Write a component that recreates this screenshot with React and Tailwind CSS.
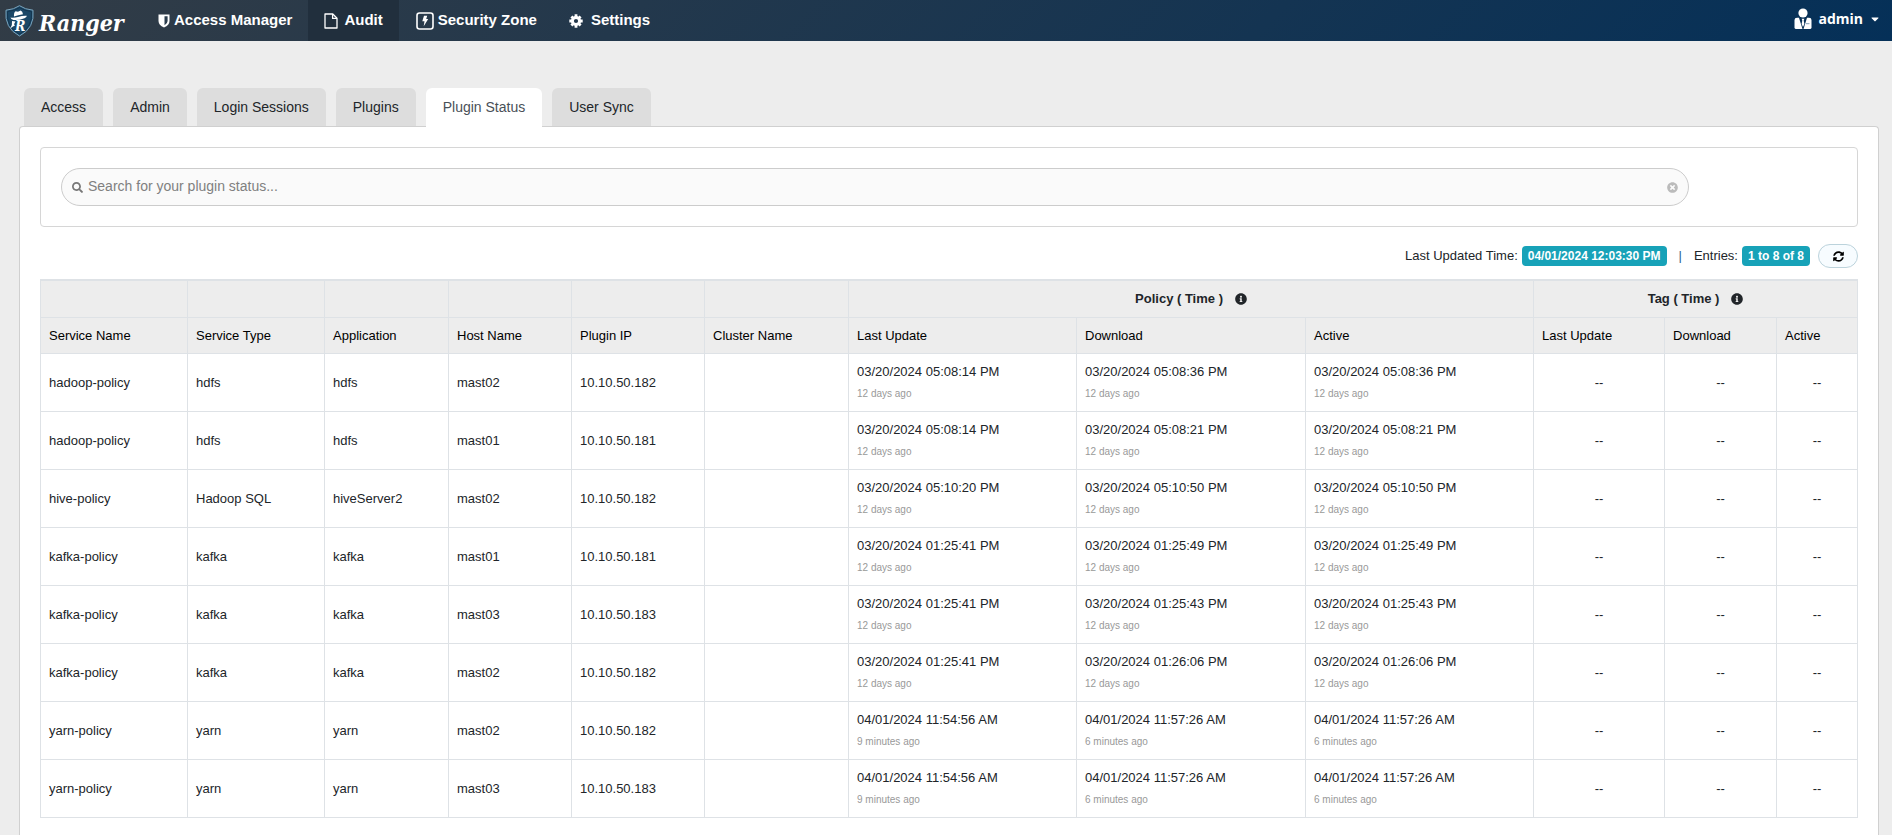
import { useState } from "react";
import {
  FaSearch,
  FaTimesCircle,
  FaInfoCircle,
  FaSyncAlt,
  FaCaretDown,
} from "react-icons/fa";

const tabs = ["Access", "Admin", "Login Sessions", "Plugins", "Plugin Status", "User Sync"];

const rows = [
  ["hadoop-policy", "hdfs", "hdfs", "mast02", "10.10.50.182", "03/20/2024 05:08:14 PM", "03/20/2024 05:08:36 PM", "12 days ago", "12 days ago"],
  ["hadoop-policy", "hdfs", "hdfs", "mast01", "10.10.50.181", "03/20/2024 05:08:14 PM", "03/20/2024 05:08:21 PM", "12 days ago", "12 days ago"],
  ["hive-policy", "Hadoop SQL", "hiveServer2", "mast02", "10.10.50.182", "03/20/2024 05:10:20 PM", "03/20/2024 05:10:50 PM", "12 days ago", "12 days ago"],
  ["kafka-policy", "kafka", "kafka", "mast01", "10.10.50.181", "03/20/2024 01:25:41 PM", "03/20/2024 01:25:49 PM", "12 days ago", "12 days ago"],
  ["kafka-policy", "kafka", "kafka", "mast03", "10.10.50.183", "03/20/2024 01:25:41 PM", "03/20/2024 01:25:43 PM", "12 days ago", "12 days ago"],
  ["kafka-policy", "kafka", "kafka", "mast02", "10.10.50.182", "03/20/2024 01:25:41 PM", "03/20/2024 01:26:06 PM", "12 days ago", "12 days ago"],
  ["yarn-policy", "yarn", "yarn", "mast02", "10.10.50.182", "04/01/2024 11:54:56 AM", "04/01/2024 11:57:26 AM", "9 minutes ago", "6 minutes ago"],
  ["yarn-policy", "yarn", "yarn", "mast03", "10.10.50.183", "04/01/2024 11:54:56 AM", "04/01/2024 11:57:26 AM", "9 minutes ago", "6 minutes ago"],
];

const columns = [
  { label: "Service Name", width: "w-[147px]" },
  { label: "Service Type", width: "w-[137px]" },
  { label: "Application", width: "w-[124px]" },
  { label: "Host Name", width: "w-[123px]" },
  { label: "Plugin IP", width: "w-[133px]" },
  { label: "Cluster Name", width: "w-[144px]" },
  { label: "Last Update", width: "w-[228px]" },
  { label: "Download", width: "w-[229px]" },
  { label: "Active", width: "w-[228px]" },
  { label: "Last Update", width: "w-[131px]" },
  { label: "Download", width: "w-[112px]" },
  { label: "Active", width: "w-[81px]" },
];

function Logo() {
  return (
    <a href="#" className="flex w-[142px] shrink-0 items-center gap-1 pl-1">
      <svg width="31" height="32" viewBox="0 0 31 32" aria-hidden="true">
        <path d="M15.500 0.700Q21 4.500 29 5.200Q31 23 15.500 31Q0 23 2 5.200Q10 4.500 15.500 0.700Z" fill="#1b4766" stroke="#7ba6bf" strokeWidth="1" />
        <path d="M15.500 2.600Q20.500 5.800 27.500 6.600Q29 22 15.500 29.200Q2 22 3.500 6.600Q10.500 5.800 15.500 2.600Z" fill="none" stroke="#143650" strokeWidth="1" />
        <path d="M6.500 12.600Q10 13.200 14 12Q18 10.600 22.800 10.800Q23 12.200 20.500 13.200Q14 15.600 9.500 15Q6.800 14.500 6.500 12.600Z" fill="#fff" />
        <path d="M10 11.600Q9.600 7.600 11.600 6.200L14 6.800L16.600 5.600Q18.600 6.400 19 9.200Q14 10.200 10 11.600Z" fill="#fff" />
        <path d="M8 16L11.500 16.600L10 19.200L11 20.600L9 21.600L6.200 23.600Q8.600 20.400 8 16Z" fill="#fff" />
        <text x="11" y="26" fill="#fff" className="font-['DejaVu_Serif_Condensed','DejaVu_Serif'] text-[14px] font-bold italic">R</text>
      </svg>
      <span className="pt-1 font-['DejaVu_Serif_Condensed','DejaVu_Serif',serif] text-[23px] leading-8 font-bold italic">
        Ranger
      </span>
    </a>
  );
}

function ShieldIcon() {
  return (
    <svg width="12" height="14" viewBox="0 0 12 14" aria-hidden="true">
      <path d="M0.500 0.500H11.500V7Q11.500 11 6 13.500Q0.500 11 0.500 7Z" fill="#fff" />
      <path d="M6.500 2.300H9.600V7Q9.600 9.600 6.500 11.200Z" fill="#2b3d4d" />
    </svg>
  );
}

function FileIcon() {
  return (
    <svg width="14" height="16" viewBox="0 0 14 16" fill="none" stroke="#fff" strokeWidth="1.300" strokeLinejoin="round" aria-hidden="true">
      <path d="M1 1H8.800L13 5.200V15H1Z" />
      <path d="M8.600 1V5.400H13" />
    </svg>
  );
}

function BoltIcon() {
  return (
    <svg width="18" height="18" viewBox="0 0 18 18" aria-hidden="true">
      <rect x="1" y="1" width="16" height="16" rx="2.500" fill="none" stroke="#fff" strokeWidth="1.600" />
      <path d="M8 3.800H11.200L10.200 7H12.200L7.700 14.200L8.500 9.300H6.300Z" fill="#fff" />
    </svg>
  );
}

function GearIcon() {
  return (
    <svg width="14" height="14" viewBox="0 0 14 14" aria-hidden="true">
      <circle cx="7" cy="7" r="3.600" fill="none" stroke="#fff" strokeWidth="3" />
      <g stroke="#fff" strokeWidth="2.800">
        <path d="M7 0.300V3M7 11V13.700M0.300 7H3M11 7H13.700" />
        <path d="M2.400 2.400L4.200 4.200M9.800 9.800L11.600 11.600M2.400 11.600L4.200 9.800M9.800 4.200L11.600 2.400" />
      </g>
    </svg>
  );
}

function UserIcon() {
  return (
    <svg width="18" height="22" viewBox="0 0 18 22" aria-hidden="true">
      <circle cx="9" cy="5" r="4.600" fill="#fff" />
      <path d="M3 9.800H5L8.500 21H2.200Q0.500 21 0.500 19.500V12Q0.500 9.800 3 9.800Z" fill="#fff" />
      <path d="M15 9.800H13L9.500 21H15.800Q17.500 21 17.500 19.500V12Q17.500 9.800 15 9.800Z" fill="#fff" />
      <path d="M7.600 10.800H10.400L9.700 12.500L10.400 16L9 19L7.600 16L8.300 12.500Z" fill="#fff" />
      <path d="M12 15.700H15.500" stroke="#7f9cb5" strokeWidth="1" />
    </svg>
  );
}

function TimeCell({ time, ago }) {
  return (
    <td className="border border-[#dee2e6] px-2 pt-[7px] pb-2">
      <div className="leading-5">{time}</div>
      <div className="mt-1 text-[10px] leading-4 text-[#999]">{ago}</div>
    </td>
  );
}

export default function App() {
  const [active, setActive] = useState("Plugin Status");
  const [search, setSearch] = useState("");

  return (
    <div className="min-h-screen flex flex-col bg-[#ededed] font-['Liberation_Sans',Arial,sans-serif] text-[13px] text-[#212529]">
      <header className="flex h-[41px] items-stretch bg-[linear-gradient(135deg,#323c46,#053058)] text-white">
        <Logo />
        <nav className="flex text-[15px] font-bold">
          <a href="#" className="flex items-center gap-1 px-4">
            <ShieldIcon />
            Access Manager
          </a>
          <a href="#" className="flex items-center gap-[6px] bg-[#212f3d] px-4">
            <FileIcon />
            Audit
          </a>
          <a href="#" className="flex items-center gap-1 pr-4 pl-[17px]">
            <BoltIcon />
            Security Zone
          </a>
          <a href="#" className="flex items-center gap-2 px-4">
            <GearIcon />
            Settings
          </a>
        </nav>
        <button className="ml-auto mr-[11px] flex items-center gap-[6px] pb-1 font-['Open_Sans',sans-serif] text-[14px] font-bold">
          <UserIcon />
          admin
          <FaCaretDown size={12} />
        </button>
      </header>

      <main className="flex grow flex-col pt-[47px] pr-[13px] pl-[19px]">
        <div className="ml-[5px] flex gap-[10px] text-[14px]">
          {tabs.map((tab) => (
            <button
              key={tab}
              onClick={() => setActive(tab)}
              className={
                tab === active
                  ? "relative -mb-px h-[39px] rounded-t-md bg-white px-[17px] text-[#495057]"
                  : "h-[38px] rounded-t-md bg-[#ddd] px-[17px] text-[#212529]"
              }
            >
              {tab}
            </button>
          ))}
        </div>

        <section className="grow rounded-t border border-b-0 border-[#d0d0d0] bg-white px-5 pt-5">
          <div className="rounded-sm border border-[#d6d6d6] p-5">
            <div className="flex h-[38px] w-11/12 items-center rounded-full border border-[#ccc] bg-[#fafafa] px-[10px]">
              <FaSearch size={11} className="text-[#777]" />
              <input
                type="text"
                aria-label="Search for your plugin status"
                placeholder="Search for your plugin status..."
                value={search}
                onChange={(e) => setSearch(e.target.value)}
                className="grow bg-transparent px-[5px] pb-[2px] text-[14px] outline-none placeholder:text-[#808080]"
              />
              <button aria-label="Clear search" onClick={() => setSearch("")}>
                <FaTimesCircle size={11} className="text-[#bbb]" />
              </button>
            </div>
          </div>

          <div className="mt-[17px] mb-[11px] flex h-6 items-center justify-end">
            <span>Last Updated Time:</span>
            <span className="ml-1 rounded bg-[#17a2b8] px-[6px] text-[12px] leading-5 font-bold text-white">04/01/2024 12:03:30 PM</span>
            <span className="mx-3 text-[#1f6391]">|</span>
            <span>Entries:</span>
            <span className="ml-1 rounded bg-[#17a2b8] px-[6px] text-[12px] leading-5 font-bold text-white">1 to 8 of 8</span>
            <button aria-label="Refresh" className="ml-2 flex h-6 w-10 items-center justify-center rounded-full border border-[#bcd3dc] bg-[#f7fcff] text-black">
              <FaSyncAlt size={11} />
            </button>
          </div>

          <div className="overflow-x-auto">
            <table className="w-full table-fixed border-collapse text-left">
              <colgroup>
                {columns.map((c, i) => (
                  <col key={i} className={c.width} />
                ))}
              </colgroup>
              <thead className="bg-[#ededed]">
                <tr className="h-[37px] border-t-2 border-[#dee2e6]">
                  {columns.slice(0, 6).map((c) => (
                    <th key={c.label} className="border border-[#dee2e6]"></th>
                  ))}
                  {["Policy ( Time )", "Tag ( Time )"].map((title) => (
                    <th key={title} colSpan={3} className="border border-[#dee2e6] font-bold">
                      <div className="flex items-center justify-center gap-3">
                        {title}
                        <FaInfoCircle size={12} />
                      </div>
                    </th>
                  ))}
                </tr>
                <tr className="h-9 text-black">
                  {columns.map((c, i) => (
                    <th key={i} className="border border-[#dee2e6] px-2 pt-[2px] font-normal">{c.label}</th>
                  ))}
                </tr>
              </thead>
              <tbody>
                {rows.map(([service, type, app, host, ip, updated, downloaded, updatedAgo, downloadedAgo], i) => (
                  <tr key={i} className="h-[58px]">
                    {[service, type, app, host, ip, ""].map((value, j) => (
                      <td key={j} className="border border-[#dee2e6] px-2 pt-[2px]">{value}</td>
                    ))}
                    <TimeCell time={updated} ago={updatedAgo} />
                    <TimeCell time={downloaded} ago={downloadedAgo} />
                    <TimeCell time={downloaded} ago={downloadedAgo} />
                    <td className="border border-[#dee2e6] pt-[2px] text-center">--</td>
                    <td className="border border-[#dee2e6] pt-[2px] text-center">--</td>
                    <td className="border border-[#dee2e6] pt-[2px] text-center">--</td>
                  </tr>
                ))}
              </tbody>
            </table>
          </div>
        </section>
      </main>
    </div>
  );
}
